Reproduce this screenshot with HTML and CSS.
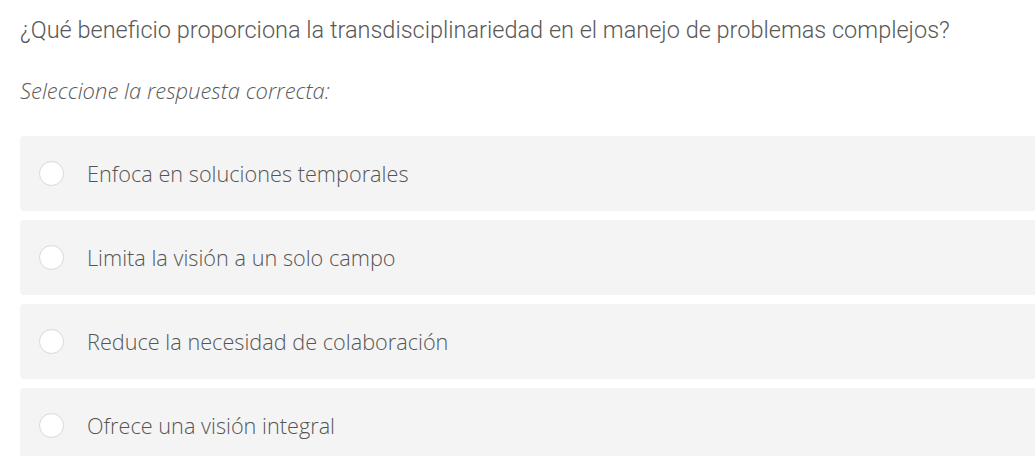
FILE: index.html
```html
<!DOCTYPE html>
<html>
<head>
    <title>Pregunta</title>
    <link rel="stylesheet" href="styles.css">
</head>
<body>
    <div class="question">
        <p class="question-text">¿Qué beneficio proporciona la transdisciplinariedad en el manejo de problemas complejos?</p>
        <p class="hint">Seleccione la respuesta correcta:</p>

        <div class="options">
            <label class="option"><span class="radio"></span>Enfoca en soluciones temporales</label>
            <label class="option"><span class="radio"></span>Limita la visión a un solo campo</label>
            <label class="option"><span class="radio"></span>Reduce la necesidad de colaboración</label>
            <label class="option"><span class="radio"></span>Ofrece una visión integral</label>
        </div>
    </div>
</body>
</html>
```

FILE: styles.css
```css
body {
    margin: 0;
    background: #fff;
    font-family: 'Open Sans', sans-serif;
    color: #555;
}

.question {
    padding: 15px 0 0 20px;
}

.question-text {
    margin: 0;
    font-family: Roboto, sans-serif;
    font-weight: 300;
    font-size: 23.5px;
    line-height: 30px;
    color: #585858;
}

.hint {
    margin: 30px 0 0 0;
    font-style: italic;
    font-weight: 300;
    font-size: 22px;
    line-height: 30px;
    color: #5a5a5a;
}

.options {
    margin-top: 31px;
    display: flex;
    flex-direction: column;
    gap: 9px;
}

.option {
    display: flex;
    align-items: center;
    height: 75px;
    padding-left: 19px;
    background-color: #f4f4f4;
    border-radius: 4px 0 0 4px;
    font-size: 21.7px;
    font-weight: 300;
    color: #555;
}

    .option .radio {
        width: 25px;
        height: 25px;
        box-sizing: border-box;
        border: 1px solid #d8d8d8;
        border-radius: 50%;
        background: #fff;
        margin-right: 23px;
        flex-shrink: 0;
    }
```
